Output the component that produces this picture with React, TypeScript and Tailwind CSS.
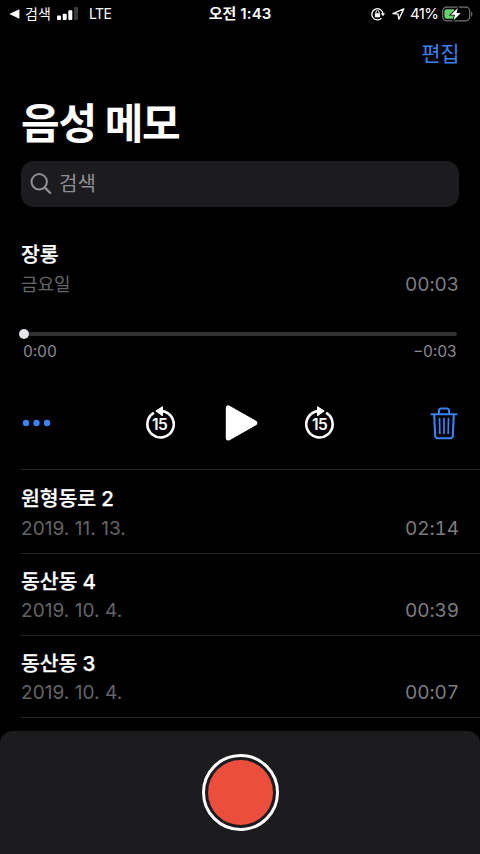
import React from "react";

const font = "font-['Inter','Noto_Sans_CJK_KR',sans-serif]";

type Memo = { title: string; date: string; length: string; row: string };

const memos: Memo[] = [
  { title: "원형동로 2", date: "2019. 11. 13.", length: "02:14", row: "h-[84px] pt-[14px] gap-[3px]" },
  { title: "동산동 4", date: "2019. 10. 4.", length: "00:39", row: "h-[82px] pt-[13px] gap-[2px]" },
  { title: "동산동 3", date: "2019. 10. 4.", length: "00:07", row: "h-[82px] pt-[13px] gap-[2px]" },
];

const titleText =
  "text-[20.5px] font-medium leading-[29px] -mb-px tracking-[-0.15px] [-webkit-text-stroke:0.25px_white]";

function StatusBar() {
  return (
    <header className="grid h-[27px] grid-cols-[1fr_auto_1fr] items-center text-[14px] leading-[27px]">
      <div className="flex items-center pl-[9px]">
        <svg width="11" height="10" viewBox="0 0 11 10" fill="white">
          <path d="M0.3 5 10.4 0.3V9.7Z" />
        </svg>
        <span className="ml-[5px] w-[27px] whitespace-nowrap">검색</span>
        <svg className="ml-[5px]" width="22" height="14" viewBox="0 0 22 14" fill="white">
          <rect x="0" y="8.5" width="4" height="4.5" rx="1" />
          <rect x="5.7" y="6.7" width="4" height="6.3" rx="1" />
          <rect x="11.3" y="3.3" width="4" height="9.7" rx="1" />
          <rect x="17" y="0" width="4" height="13" rx="1" fill="#3a3a3c" />
        </svg>
        <span className="ml-[10px] tracking-[-0.6px]">LTE</span>
      </div>
      <span className="text-[15px] font-semibold tracking-[0.1px]">오전 1:43</span>
      <div className="flex items-center justify-end pr-[6px]">
        <svg width="14" height="14" viewBox="0 0 14 14" fill="none" stroke="white" strokeWidth="1.3">
          <path d="M10.6 11.1A5.6 5.6 0 1 1 12 6.6" />
          <path d="M9.8 6.3h4.2L12 9.2Z" fill="white" stroke="none" />
          <rect x="3.9" y="6.2" width="5.2" height="4" rx=".6" fill="white" stroke="none" />
          <path d="M5 6.5V5a1.5 1.5 0 0 1 3 0V6.5" strokeWidth="1" />
        </svg>
        <svg className="ml-[7px]" width="13" height="12" viewBox="0 0 13 12" fill="none" stroke="white" strokeWidth="1.3" strokeLinejoin="round">
          <path d="M11.8 0.9 0.9 5.6 6 6.2 6.8 11.2Z" />
        </svg>
        <span className="ml-[5px] w-[29px] whitespace-nowrap text-[15px] tracking-[-0.6px]">41%</span>
        <svg className="ml-[3px]" width="32" height="16" viewBox="0 0 32 16">
          <rect x="0.7" y="1.2" width="27" height="13.6" rx="4" fill="none" stroke="#77777a" strokeWidth="1.2" />
          <path d="M29.2 5.5c1.6.5 1.6 4.5 0 5Z" fill="#77777a" />
          <path d="M4.6 3.2H12V12.8H4.6Q2.4 12.8 2.4 10.6V5.4Q2.4 3.2 4.6 3.2Z" fill="#65d26b" />
          <path d="M15.8 2 8.8 8.8H13L11.6 14.2 18.8 7H14.5Z" fill="white" stroke="black" strokeWidth="1.6" paintOrder="stroke" />
        </svg>
      </div>
    </header>
  );
}

function SkipIcon({ forward = false }: { forward?: boolean }) {
  return (
    <svg width="30" height="34" viewBox="0 0 30 34">
      <g transform={forward ? "translate(30 0) scale(-1 1)" : undefined}>
        <path d="M8 7.4A13.2 13.2 0 1 0 17 5.1" fill="none" stroke="white" strokeWidth="2.6" strokeLinecap="round" />
        <path d="M11.2 5.1 17.4 0.9V9.5Z" fill="white" stroke="white" strokeWidth="1.2" strokeLinejoin="round" />
      </g>
      <text x="14.6" y="23.6" textAnchor="middle" fill="white" className="text-[15.5px] font-semibold tracking-[-0.6px]">15</text>
    </svg>
  );
}

function Player() {
  return (
    <section className="flex h-[263px] flex-col border-b border-[#242426] pt-[33px]">
      <div className="ml-[1px] mr-[21px] flex flex-col gap-[3px]">
        <h2 className={titleText}>장롱</h2>
        <div className="flex justify-between text-[19px] leading-[28px] text-[#7c7c7f]">
          <span className="text-[18px] text-[#656567]">금요일</span>
          <span className="tabular-nums tracking-[-0.1px]">00:03</span>
        </div>
      </div>
      <div className="-ml-[1px] mr-[23px] mt-[30px] flex h-[10px] items-center">
        <div className="h-[10px] w-[10px] rounded-full bg-[#e5e5ea]" />
        <div className="h-[4px] flex-1 rounded-r-full bg-[#313133]" />
      </div>
      <div className="ml-[3px] mr-[23px] mt-[3px] flex justify-between text-[15.3px] leading-5 text-[#8c8c90] tabular-nums">
        <span>0:00</span>
        <span>−0:03</span>
      </div>
      <div className="mr-[22px] mt-[40px] flex h-[42px] items-center">
        <svg className="ml-[2px]" width="30" height="8" viewBox="0 0 30 8" fill="#3b82f6">
          <circle cx="4" cy="4" r="3.2" />
          <circle cx="14.5" cy="4" r="3.2" />
          <circle cx="25" cy="4" r="3.2" />
        </svg>
        <div className="ml-[93px]"><SkipIcon /></div>
        <svg className="ml-[50px]" width="34" height="38" viewBox="0 0 34 38">
          <path d="M3.3 3.9V34.1L29.8 19Z" fill="white" stroke="white" strokeWidth="5" strokeLinejoin="round" />
        </svg>
        <div className="ml-[46px]"><SkipIcon forward /></div>
        <svg className="ml-auto" width="28" height="34" viewBox="0 0 28 34" fill="none" stroke="#3b82f6" strokeWidth="2.1" strokeLinecap="round" strokeLinejoin="round">
          <path d="M1.5 8.2H26.5M4.2 8.2 5.2 30Q5.4 32.2 7.6 32.2H20.4Q22.6 32.2 22.8 30L23.8 8.2M8.9 8V5Q8.9 2.5 11.4 2.5H16.6Q19.1 2.5 19.1 5V8" />
          <path d="M9.5 12.5 9.8 27.5M14 12.5V27.5M18.5 12.5 18.2 27.5" strokeWidth="1.7" />
        </svg>
      </div>
    </section>
  );
}

function MemoRow({ memo }: { memo: Memo }) {
  return (
    <li className={`flex flex-col border-b border-[#242426] pl-[1px] pr-[21px] ${memo.row}`}>
      <h2 className={titleText}>{memo.title}</h2>
      <div className="flex justify-between text-[19px] leading-[28px]">
        <span className="text-[#656567] tracking-[0.05px]">{memo.date}</span>
        <span className="tabular-nums tracking-[-0.1px] text-[#7c7c7f]">{memo.length}</span>
      </div>
    </li>
  );
}

export default function App() {
  return (
    <div className={`flex h-[854px] w-[480px] flex-col overflow-hidden bg-black text-white ${font}`}>
      <StatusBar />
      <div className="flex h-[53px] items-center justify-end pr-[21px] text-[21px] text-[#3b82f6]">
        <button className="tracking-[-0.5px]">편집</button>
      </div>
      <h1 className="ml-[21px] h-[81px] pt-[14px] text-[42px] font-bold leading-[60px] tracking-[-1.2px]">음성 메모</h1>
      <div className="mx-[21px] flex h-[46px] items-center rounded-[13px] bg-[#1c1c1e] pl-[9px] text-[20px] text-[#8e8e93]">
        <svg width="22" height="22" viewBox="0 0 22 22" fill="none" stroke="#8e8e93" strokeWidth="2" strokeLinecap="round">
          <circle cx="9.2" cy="8.8" r="7.7" />
          <path d="M14.8 14.5 20.2 20" strokeWidth="2.4" />
        </svg>
        <span className="ml-[7px]">검색</span>
      </div>
      <main className="flex flex-1 flex-col pl-[20px]">
        <Player />
        <ul>
          {memos.map((memo) => (
            <MemoRow key={memo.title} memo={memo} />
          ))}
        </ul>
      </main>
      <footer className="flex h-[123px] justify-center rounded-t-[13px] bg-[#1c1c1e] pt-[23px]">
        <button className="flex h-[77px] w-[77px] items-center justify-center rounded-full border-[3px] border-white">
          <span className="h-[65px] w-[65px] rounded-full bg-[#eb4e3d]" />
        </button>
      </footer>
    </div>
  );
}
